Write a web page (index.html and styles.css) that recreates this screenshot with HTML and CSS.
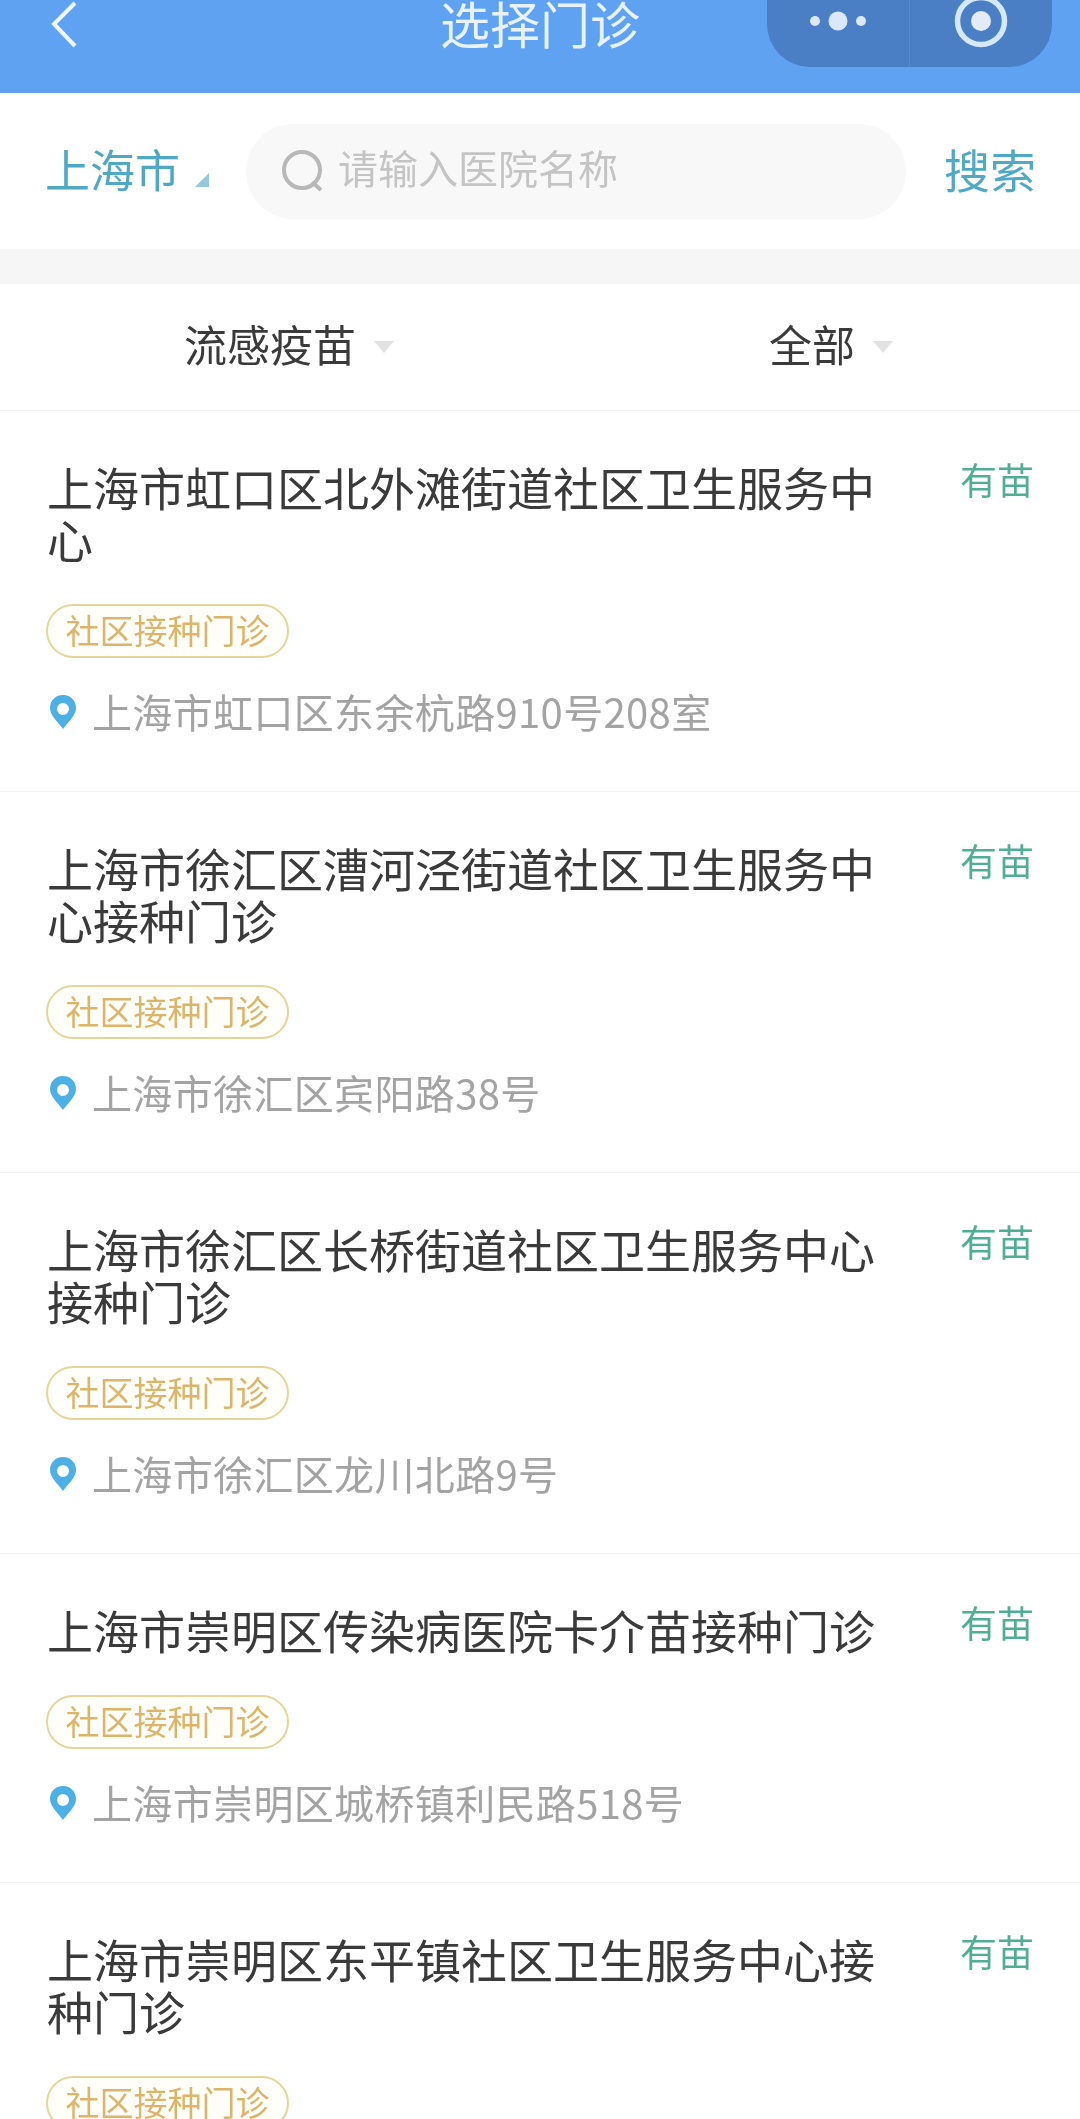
FILE: index.html
```html
<!DOCTYPE html>
<html lang="zh-CN">
<head>
    <meta charset="UTF-8">
    <title>选择门诊</title>
    <link rel="stylesheet" href="styles.css">
</head>
<body>

<header class="nav">
    <svg class="nav-back" width="30" height="52" viewBox="0 0 30 52"><path d="M26 3 L5 24 L26 46" fill="none" stroke="#f0f6fe" stroke-width="4"/></svg>
    <h1 class="nav-title">选择门诊</h1>
    <div class="capsule">
        <div class="capsule-part">
            <svg width="58" height="20" viewBox="0 0 58 20"><circle cx="6" cy="10" r="5" fill="#dbe8fa"/><circle cx="29" cy="10" r="9.500" fill="#dbe8fa"/><circle cx="52" cy="10" r="5" fill="#dbe8fa"/></svg>
        </div>
        <div class="capsule-part capsule-right">
            <svg width="56" height="56" viewBox="0 0 56 56"><circle cx="28" cy="28" r="23.500" fill="none" stroke="#d5e8fa" stroke-width="5.500"/><circle cx="28" cy="28" r="10" fill="#e2ebf6"/></svg>
        </div>
    </div>
</header>

<div class="search-row">
    <div class="city">上海市<span class="city-arrow"></span></div>
    <div class="search-box">
        <svg width="46" height="48" viewBox="0 0 46 48"><circle cx="22" cy="23" r="18" fill="none" stroke="#b8b8b8" stroke-width="4"/><path d="M32 35 L41 43" stroke="#b8b8b8" stroke-width="4"/></svg>
        <span class="search-hint">请输入医院名称</span>
    </div>
    <div class="search-btn">搜索</div>
</div>

<div class="filters">
    <div class="filter filter-left">流感疫苗<span class="filter-arrow"></span></div>
    <div class="filter filter-right">全部<span class="filter-arrow"></span></div>
</div>

<div class="list">
    <div class="item">
        <div class="item-head">
            <div class="item-name">上海市虹口区北外滩街道社区卫生服务中心</div>
            <div class="item-stock">有苗</div>
        </div>
        <span class="tag">社区接种门诊</span>
        <div class="address">
            <svg width="26" height="34" viewBox="0 0 26 34"><path fill-rule="evenodd" d="M13 0 C5 0 0 6 0 13 C0 21 9 28 13 34 C17 28 26 21 26 13 C26 6 21 0 13 0 Z M13 8 A6 6 0 1 1 13 20 A6 6 0 1 1 13 8 Z" fill="#4cb0e6"/></svg>
            <span class="address-text">上海市虹口区东余杭路910号208室</span>
        </div>
    </div>
    <div class="item">
        <div class="item-head">
            <div class="item-name">上海市徐汇区漕河泾街道社区卫生服务中心接种门诊</div>
            <div class="item-stock">有苗</div>
        </div>
        <span class="tag">社区接种门诊</span>
        <div class="address">
            <svg width="26" height="34" viewBox="0 0 26 34"><path fill-rule="evenodd" d="M13 0 C5 0 0 6 0 13 C0 21 9 28 13 34 C17 28 26 21 26 13 C26 6 21 0 13 0 Z M13 8 A6 6 0 1 1 13 20 A6 6 0 1 1 13 8 Z" fill="#4cb0e6"/></svg>
            <span class="address-text">上海市徐汇区宾阳路38号</span>
        </div>
    </div>
    <div class="item">
        <div class="item-head">
            <div class="item-name">上海市徐汇区长桥街道社区卫生服务中心接种门诊</div>
            <div class="item-stock">有苗</div>
        </div>
        <span class="tag">社区接种门诊</span>
        <div class="address">
            <svg width="26" height="34" viewBox="0 0 26 34"><path fill-rule="evenodd" d="M13 0 C5 0 0 6 0 13 C0 21 9 28 13 34 C17 28 26 21 26 13 C26 6 21 0 13 0 Z M13 8 A6 6 0 1 1 13 20 A6 6 0 1 1 13 8 Z" fill="#4cb0e6"/></svg>
            <span class="address-text">上海市徐汇区龙川北路9号</span>
        </div>
    </div>
    <div class="item">
        <div class="item-head">
            <div class="item-name">上海市崇明区传染病医院卡介苗接种门诊</div>
            <div class="item-stock">有苗</div>
        </div>
        <span class="tag">社区接种门诊</span>
        <div class="address">
            <svg width="26" height="34" viewBox="0 0 26 34"><path fill-rule="evenodd" d="M13 0 C5 0 0 6 0 13 C0 21 9 28 13 34 C17 28 26 21 26 13 C26 6 21 0 13 0 Z M13 8 A6 6 0 1 1 13 20 A6 6 0 1 1 13 8 Z" fill="#4cb0e6"/></svg>
            <span class="address-text">上海市崇明区城桥镇利民路518号</span>
        </div>
    </div>
    <div class="item">
        <div class="item-head">
            <div class="item-name">上海市崇明区东平镇社区卫生服务中心接种门诊</div>
            <div class="item-stock">有苗</div>
        </div>
        <span class="tag">社区接种门诊</span>
    </div>
</div>

</body>
</html>
```

FILE: styles.css
```css
html, body {
    margin: 0;
    height: 100%;
    overflow: hidden;
}

body {
    background: #fff;
    color: #3a3a3a;
    font-family: "Noto Sans CJK SC", "Noto Sans", sans-serif;
    filter: blur(0.6px);
}

/* top bar, the capsule runs off the top of the screen */
.nav {
    position: relative;
    height: 93px;
    background: #5ea2f1;
    overflow: hidden;
}

.nav-back {
    position: absolute;
    left: 49px;
    top: 0;
}

.nav-title {
    margin: 0;
    height: 44px;
    line-height: 44px;
    font-size: 50px;
    font-weight: 400;
    color: #e8f2fd;
    text-align: center;
}

.capsule {
    position: absolute;
    left: 767px;
    top: -40px;
    width: 285px;
    height: 107px;
    display: flex;
    background: #4a7fc6;
    border-radius: 43px;
}

.capsule-part {
    flex: 1;
    display: flex;
    align-items: center;
    justify-content: center;
    padding-top: 14px;
}

.capsule-right {
    border-left: 1px solid #5589cf;
}

/* search */
.search-row {
    height: 156px;
    display: flex;
    align-items: center;
    padding: 0 44px 0 45px;
}

.city {
    width: 201px;
    padding-bottom: 6px;
    font-size: 45px;
    color: #4fa9c4;
    display: flex;
    align-items: center;
}

.city-arrow {
    width: 0;
    height: 0;
    margin: 24px 0 0 15px;
    border-left: 14px solid transparent;
    border-bottom: 14px solid #96c8d8;
}

.search-box {
    width: 660px;
    height: 95px;
    box-sizing: border-box;
    padding-left: 34px;
    display: flex;
    align-items: center;
    gap: 12px;
    background: #f8f8f8;
    border-radius: 48px;
    font-size: 40px;
    color: #c4c4c4;
}

.search-hint {
    padding-bottom: 8px;
}

.search-btn {
    margin-left: auto;
    padding-bottom: 6px;
    font-size: 46px;
    color: #4fa9c4;
}

/* filters */
.filters {
    height: 126px;
    display: flex;
    align-items: center;
    border-top: 35px solid #f6f6f6;
    border-bottom: 1px solid #f0f0f0;
    font-size: 43px;
}

.filter {
    display: flex;
    align-items: center;
    padding-bottom: 8px;
}

.filter-left {
    margin-left: 184px;
}

.filter-right {
    margin-left: 375px;
}

.filter-arrow {
    width: 0;
    height: 0;
    margin: 8px 0 0 18px;
    border-left: 10px solid transparent;
    border-right: 10px solid transparent;
    border-top: 12px solid #e2e2e2;
}

/* list */
.item {
    padding: 49px 46px 54px 47px;
    border-bottom: 1px solid #f2f2f2;
}

.item-head {
    display: flex;
    justify-content: space-between;
    margin-bottom: 40px;
}

.item-name {
    width: 840px;
    font-size: 46px;
    line-height: 52px;
}

.item-stock {
    margin-top: 1px;
    font-size: 37px;
    line-height: 36px;
    color: #4fae94;
}

.tag {
    display: block;
    width: 243px;
    height: 54px;
    margin-left: -1px;
    box-sizing: border-box;
    border: 2px solid #e6d49b;
    border-radius: 27px;
    font-size: 34px;
    line-height: 48px;
    text-align: center;
    color: #dcb56a;
    background: #fffef9;
}

.address {
    display: flex;
    align-items: center;
    gap: 16px;
    height: 50px;
    margin: 29px 0 0 3px;
    font-size: 40px;
    letter-spacing: 0.35px;
    color: #a3a3a3;
}

.address-text {
    padding-bottom: 2px;
}
```
